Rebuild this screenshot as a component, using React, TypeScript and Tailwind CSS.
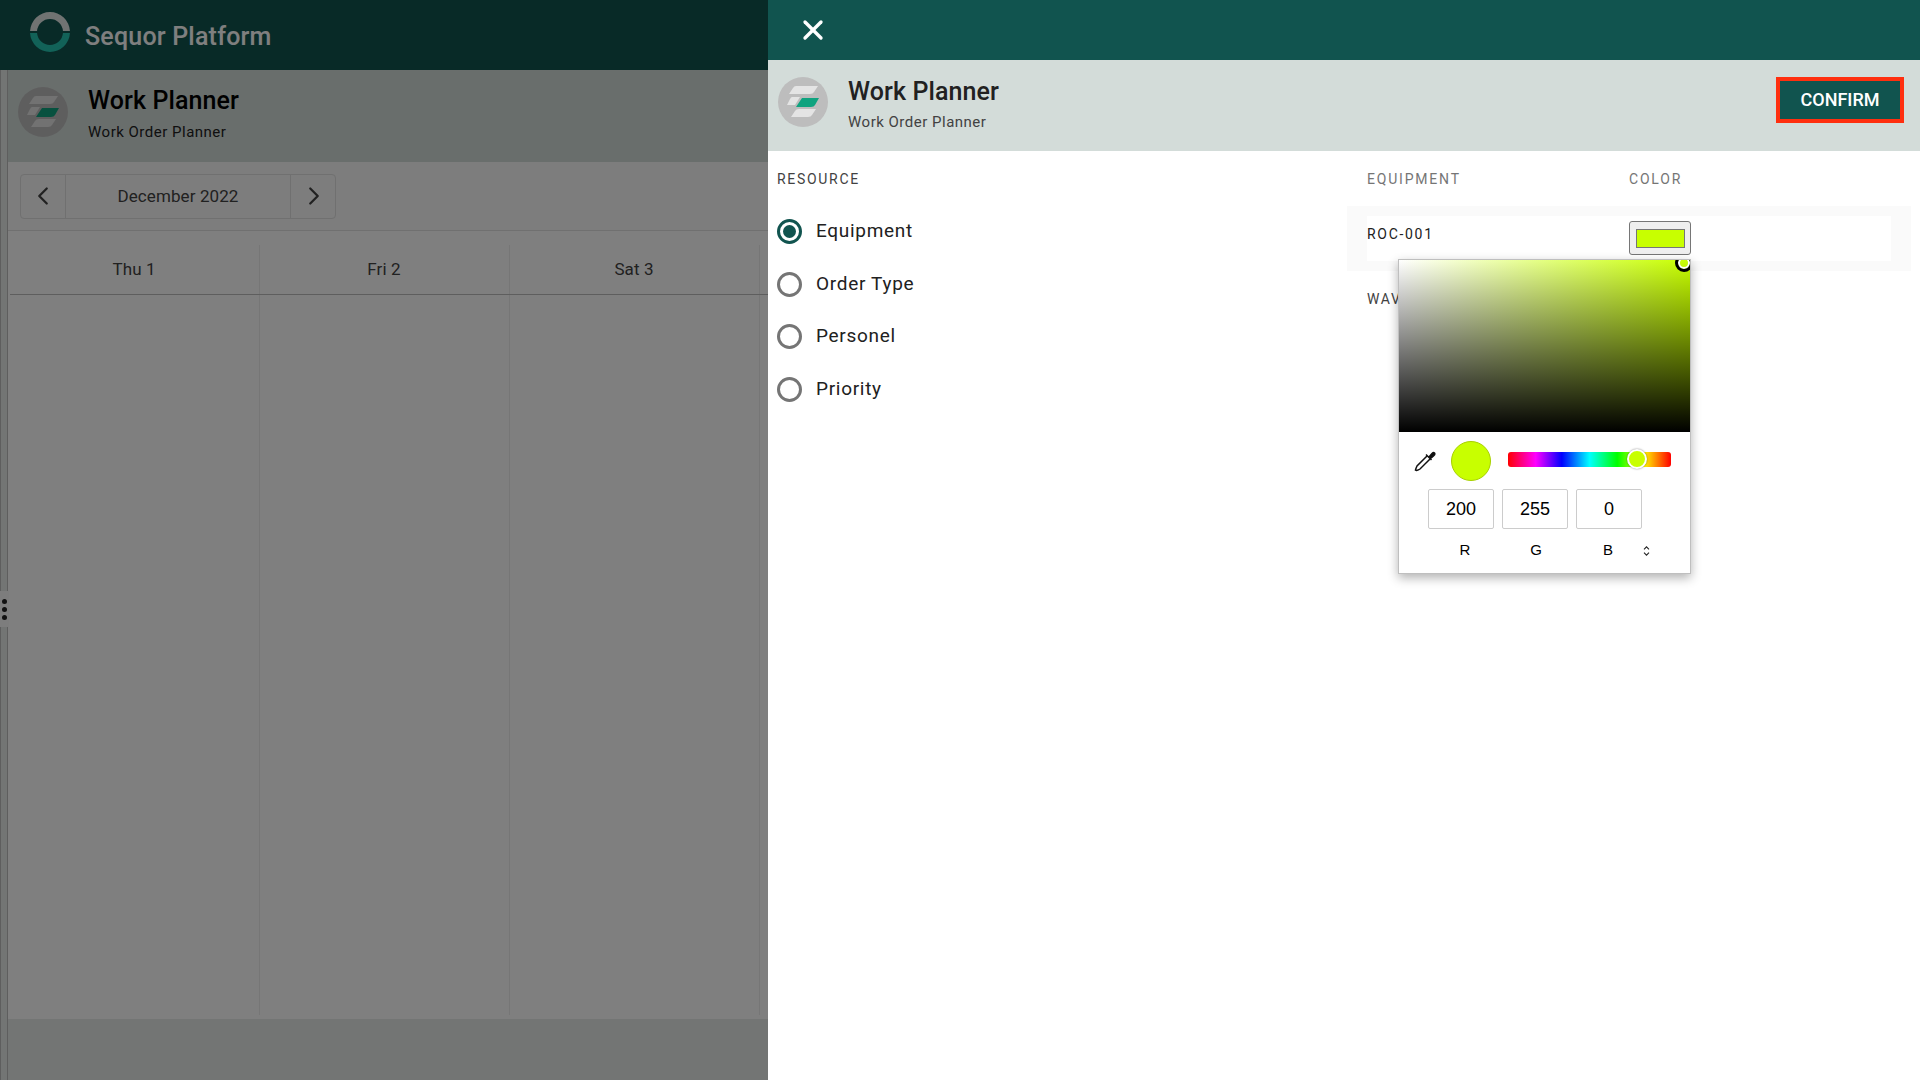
import { X, ChevronLeft, ChevronRight } from "lucide-react";

const RESOURCES = ["Equipment", "Order Type", "Personel", "Priority"];
const DAYS = ["Thu 1", "Fri 2", "Sat 3"];

function AppMark() {
  return (
    <svg width="50" height="50" viewBox="0 0 50 50" className="shrink-0">
      <circle cx="25" cy="25" r="25" fill="#bdbdbd" />
      <path d="M18 9H40L36 15Q35 17 32 17H11L15 11Q16 9 18 9Z" fill="#e4e4e4" />
      <path d="M14 20H22L17 28H9L12 22Q13 20 14 20Z" fill="#e4e4e4" />
      <path d="M24 21H41L37 28Q36 30 33 30H18Z" fill="#0fa37f" />
      <path d="M21 32H38L34 38Q33 40 30 40H13L17 34Q18 32 21 32Z" fill="#e4e4e4" />
    </svg>
  );
}

function Radio({ label, checked }: { label: string; checked?: boolean }) {
  return (
    <div className="flex h-[52.700px] items-center">
      <span
        className={
          "flex h-[25px] w-[25px] items-center justify-center rounded-full border-[3px] " +
          (checked ? "border-[#11544f]" : "border-[#757575]")
        }
      >
        {checked && <span className="h-[13px] w-[13px] rounded-full bg-[#11544f]" />}
      </span>
      <span className="ml-[14px] text-[19px] tracking-[0.7px] text-[#212121]">{label}</span>
    </div>
  );
}

function Background() {
  return (
    <div className="flex h-screen flex-col bg-[#e6eae8]">
      <header className="flex h-[70px] shrink-0 items-center bg-[#11544f] pb-[6px] pl-[30px]">
        <svg width="40" height="40" viewBox="0 0 40 40">
          <path d="M0.030 19A20 20 0 0 1 39.970 19H32.960A13 13 0 0 0 7.040 19Z" fill="#e0e6e4" />
          <path d="M0.030 21H7.040A13 13 0 0 0 32.960 21H39.970A20 20 0 0 1 0.030 21Z" fill="#24c4b0" />
        </svg>
        <span className="ml-[15px] mt-[9px] text-[25px] font-medium tracking-[0.2px] text-white">Sequor Platform</span>
      </header>
      <div className="flex min-h-0 flex-1">
        <div className="relative w-[8px] shrink-0 border-x border-[#bdbdbd] bg-[#e6eae8]">
          <div className="absolute left-[-1px] top-[521px] flex h-[36px] w-[9px] flex-col items-center justify-center gap-[3px] bg-[#fafafa]">
            <span className="h-[5px] w-[5px] rounded-full bg-[#222]" />
            <span className="h-[5px] w-[5px] rounded-full bg-[#222]" />
            <span className="h-[5px] w-[5px] rounded-full bg-[#222]" />
          </div>
        </div>
        <main className="flex min-w-0 flex-1 flex-col">
          <div className="flex h-[92px] shrink-0 items-center bg-[#d3dcd9] pb-[8px] pl-[10px]">
            <AppMark />
            <div className="ml-[20px] mt-[6px]">
              <div className="text-[25px] font-medium leading-[30px] tracking-[0.1px] text-black">Work Planner</div>
              <div className="mt-[5px] text-[15px] tracking-[0.5px] text-[#212121]">Work Order Planner</div>
            </div>
          </div>
          <div className="flex h-[68px] shrink-0 items-center bg-[#fafafa] pl-[12px]">
            <div className="flex h-[45px] w-[316px] items-center rounded-[4px] border border-[#e0e0e0] text-[#424242]">
              <div className="flex h-full w-[45px] items-center justify-center border-r border-[#e0e0e0]">
                <ChevronLeft size={30} strokeWidth={1.8} />
              </div>
              <div className="flex-1 pt-[1px] text-center text-[17px] tracking-[0.1px]">December 2022</div>
              <div className="flex h-full w-[45px] items-center justify-center border-l border-[#e0e0e0] pl-[1px]">
                <ChevronRight size={30} strokeWidth={1.8} />
              </div>
            </div>
          </div>
          <div className="flex h-[789px] shrink-0 flex-col border-t border-[#e0e0e0] bg-white pb-[4px] pl-[2px] pt-[14px]">
            <div className="flex h-[50px] shrink-0 border-b border-[#bdbdbd]">
              {DAYS.map((d) => (
                <div key={d} className="flex w-[250px] items-center justify-center border-r border-[#ececec] pr-[1px] text-[17px] tracking-[0.1px] text-[#424242]">
                  {d}
                </div>
              ))}
            </div>
            <div className="flex flex-1">
              {DAYS.map((d) => (
                <div key={d} className="w-[250px] border-r border-[#ececec]" />
              ))}
            </div>
          </div>
        </main>
      </div>
    </div>
  );
}

function ColorPicker() {
  return (
    <div className="absolute left-[1398px] top-[259px] flex h-[315px] w-[293px] flex-col border border-[#bfbfbf] bg-white shadow-[0_4px_10px_rgba(0,0,0,0.3)] font-['Liberation_Sans',sans-serif]">
      <div className="relative h-[172px] shrink-0 overflow-hidden bg-[linear-gradient(to_top,#000,transparent),linear-gradient(to_right,#fff,#c8ff00)]">
        <span className="absolute right-[-3px] top-[-6px] h-[18px] w-[18px] rounded-full border-[3px] border-black shadow-[inset_0_0_0_2px_#fff]" />
      </div>
      <div className="flex h-[57px] shrink-0 items-center pl-[15px] pt-[1px]">
        <svg width="22" height="22" viewBox="0 0 22 22" fill="none" stroke="#111" strokeWidth="1.500">
          <path d="M13 6L3 16Q2 18 1.500 20L2.500 20.500Q4.500 20 6 19L16 9" fill="#fff" />
          <path d="M12 4.500L17.500 10M15 7L18 3.500Q19.500 2 20.500 3Q21.500 4.500 19.500 6L16 9" fill="#111" />
        </svg>
        <span className="ml-[15px] h-[40px] w-[40px] rounded-full border border-[#a8d000] bg-[#c8ff00]" />
        <div className="relative mb-[4px] ml-[17px] h-[15px] w-[163px] rounded-[3px] bg-[linear-gradient(to_right,#f00,#f0f_17%,#00f_33%,#0ff_50%,#0f0_67%,#ff0_83%,#f00)]">
          <span className="absolute left-[119px] top-[-3px] h-[20px] w-[20px] rounded-full border-[2px] border-white bg-[#c8ff00] shadow-[0_0_2px_rgba(0,0,0,0.5)]" />
        </div>
      </div>
      <div className="flex gap-[8px] pl-[29px]">
        {["200", "255", "0"].map((v) => (
          <div key={v} className="flex h-[40px] w-[66px] items-center justify-center rounded-[2px] border border-[#ccc] text-[18px] text-black">
            {v}
          </div>
        ))}
      </div>
      <div className="flex flex-1 items-center pb-[1px] pl-[29px] text-[15px] text-black">
        <span className="w-[72px] pl-[2px] text-center">R</span>
        <span className="w-[72px] text-center">G</span>
        <span className="w-[72px] text-center">B</span>
        <svg className="ml-[-1px]" width="7" height="10" viewBox="0 0 8 12" fill="none" stroke="#222" strokeWidth="1.300">
          <path d="M1 4l3-3 3 3M1 8l3 3 3-3" />
        </svg>
      </div>
    </div>
  );
}

function Drawer() {
  return (
    <div className="absolute bottom-0 right-0 top-0 flex w-[1152px] flex-col bg-white">
      <div className="flex h-[60px] shrink-0 items-center bg-[#11544f] pl-[29px]">
        <X size={32} strokeWidth={2.5} className="text-white" />
      </div>
      <div className="flex h-[91px] shrink-0 items-center bg-[#d3dcd9] pb-[7px] pl-[10px] pr-[16px]">
        <AppMark />
        <div className="ml-[20px] mt-[6px]">
          <div className="text-[25px] font-medium leading-[30px] tracking-[0.1px] text-[#212121]">Work Planner</div>
          <div className="mt-[4px] text-[15px] tracking-[0.5px] text-[#424242]">Work Order Planner</div>
        </div>
        <button className="mb-[4px] ml-auto h-[46px] w-[128px] border-[4px] border-[#ff2f0f] bg-[#11544f] pb-[1px] text-[18px] font-medium text-white">
          CONFIRM
        </button>
      </div>
      <div className="flex flex-1 pl-[9px]">
        <div className="w-[590px] pt-[18px]">
          <div className="text-[14px] tracking-[1.7px] text-[#424242]">RESOURCE</div>
          <div className="mt-[15px]">
            {RESOURCES.map((r) => (
              <Radio key={r} label={r} checked={r === "Equipment"} />
            ))}
          </div>
        </div>
        <div className="flex-1 pt-[18px]">
          <div className="flex text-[14px] tracking-[1.8px] text-[#757575]">
            <span className="w-[262px]">EQUIPMENT</span>
            <span>COLOR</span>
          </div>
          <div className="ml-[-20px] mt-[16px] w-[564px] bg-[#fafafa] px-[20px] py-[10px]">
            <div className="flex h-[45px] bg-white pt-[5px]">
              <span className="w-[262px] pt-[3px] text-[14px] tracking-[1.7px] text-[#212121]">ROC-001</span>
              <div className="flex h-[34px] w-[62px] items-center justify-center rounded-[3px] border border-[#767676] bg-[#efefef]">
                <span className="h-[19px] w-[49px] border border-[#767676] bg-[#c8ff00]" />
              </div>
            </div>
          </div>
          <div className="mt-[18px] text-[14px] tracking-[1.7px] text-[#424242]">WAVE-001</div>
        </div>
      </div>
    </div>
  );
}

export default function App() {
  return (
    <div className="relative h-screen w-full overflow-hidden font-['Roboto',sans-serif]">
      <Background />
      <div className="absolute inset-0 bg-black/50" />
      <Drawer />
      <ColorPicker />
    </div>
  );
}
